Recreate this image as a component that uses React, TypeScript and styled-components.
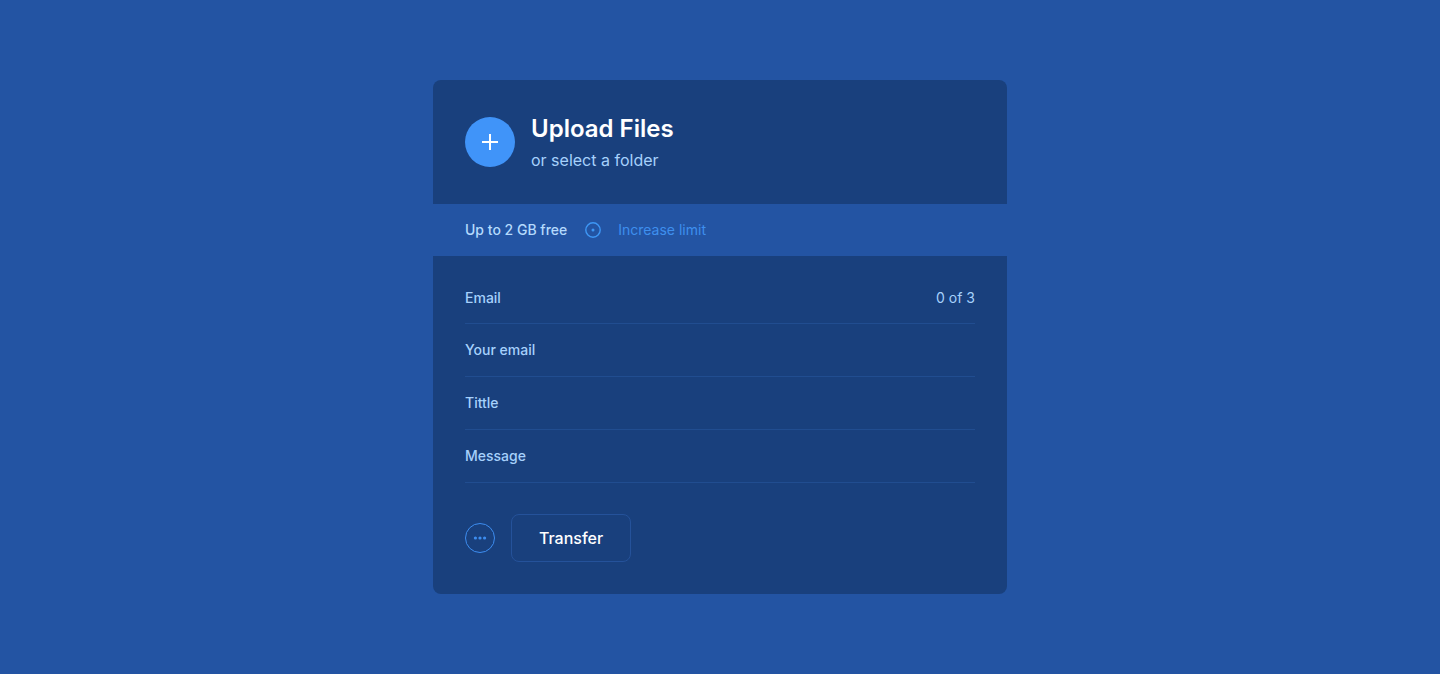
import React from "react";
import styled, { createGlobalStyle } from "styled-components";

const GlobalStyle = createGlobalStyle`
  *, *::before, *::after { box-sizing: border-box; }
  body {
    margin: 0;
    background: #2354a3;
    font-family: Inter, "Liberation Sans", sans-serif;
    -webkit-font-smoothing: antialiased;
  }
  button, input { font-family: inherit; }
`;

const Page = styled.main`
  min-height: 100vh;
  display: flex;
  align-items: center;
  justify-content: center;
  padding: 80px 24px;
`;

const Card = styled.form`
  width: 100%;
  max-width: 574px;
`;

const Header = styled.header`
  display: flex;
  align-items: center;
  gap: 16px;
  padding: 32px;
  border-radius: 8px 8px 0 0;
  background: #19407d;
`;

const AddButton = styled.button`
  display: flex;
  align-items: center;
  justify-content: center;
  width: 50px;
  height: 50px;
  padding: 0;
  border: 0;
  border-radius: 50%;
  background: #4094f9;
  color: #fff;
  cursor: pointer;
`;

const Heading = styled.div`
  display: flex;
  flex-direction: column;
  gap: 2px;
`;

const Title = styled.h1`
  margin: 0;
  color: #fff;
  font-size: 24px;
  font-weight: 600;
  line-height: 34px;
`;

const FolderLink = styled.a`
  color: #a6d1fc;
  font-size: 16px;
  line-height: 24px;
  text-decoration: none;
`;

const LimitBar = styled.div`
  display: flex;
  align-items: center;
  height: 52px;
  padding: 0 32px;
  gap: 16px;
  color: #b4dafd;
  font-size: 14px;
  font-weight: 500;
  line-height: 16px;
`;

const LimitLink = styled.a`
  color: #3e8fee;
  font-weight: 400;
  text-decoration: none;
`;

const Body = styled.div`
  padding: 16px 32px 32px;
  border-radius: 0 0 8px 8px;
  background: #19407d;
`;

const Field = styled.div`
  display: flex;
  align-items: center;
  gap: 12px;
  height: 53px;
  border-bottom: 1px solid #214d90;
  color: #a6d1fc;
  font-size: 14px;
  line-height: 16px;

  &:first-child {
    height: 52px;
  }
`;

const Label = styled.label`
  font-weight: 500;
`;

const Input = styled.input`
  flex: 1;
  min-width: 0;
  padding: 0;
  border: 0;
  outline: 0;
  background: transparent;
  color: #fff;
  font-size: 14px;
`;

const Actions = styled.div`
  display: flex;
  align-items: center;
  gap: 16px;
  padding-top: 31px;
`;

const MoreButton = styled.button`
  display: flex;
  align-items: center;
  justify-content: center;
  width: 30px;
  height: 30px;
  padding: 0;
  border: 1px solid #3d8df0;
  border-radius: 50%;
  background: transparent;
  color: #3d8df0;
  cursor: pointer;
`;

const TransferButton = styled.button`
  width: 120px;
  height: 48px;
  padding: 0;
  border: 1px solid #25529a;
  border-radius: 8px;
  background: transparent;
  color: #fff;
  font-size: 16px;
  font-weight: 500;
  cursor: pointer;
`;

const fields = [
  { id: "email", label: "Email", type: "email", count: "0 of 3" },
  { id: "sender", label: "Your email", type: "email" },
  { id: "title", label: "Tittle", type: "text" },
  { id: "message", label: "Message", type: "text" },
];

export default function App() {
  return (
    <>
      <GlobalStyle />
      <Page>
        <Card onSubmit={(e: React.FormEvent) => e.preventDefault()}>
          <Header>
            <AddButton type="button" aria-label="Add files">
              <svg width="16" height="16" viewBox="0 0 16 16" fill="none" stroke="currentColor" strokeWidth="2">
                <path d="M8 0v16M0 8h16" />
              </svg>
            </AddButton>
            <Heading>
              <Title>Upload Files</Title>
              <FolderLink href="#folder">or select a folder</FolderLink>
            </Heading>
          </Header>
          <LimitBar>
            <span>Up to 2 GB free</span>
            <svg width="19" height="18" viewBox="0 0 19 18" fill="none">
              <circle cx="10" cy="9" r="7.2" stroke="#3e97f5" strokeWidth="1.4" />
              <circle cx="10" cy="9" r="1.5" fill="#3e97f5" />
            </svg>
            <LimitLink href="#limit">Increase limit</LimitLink>
          </LimitBar>
          <Body>
            {fields.map((f) => (
              <Field key={f.id}>
                <Label htmlFor={f.id}>{f.label}</Label>
                <Input id={f.id} type={f.type} />
                {f.count && <span>{f.count}</span>}
              </Field>
            ))}
            <Actions>
              <MoreButton type="button" aria-label="More options">
                <svg width="14" height="4" viewBox="0 0 14 4" fill="currentColor">
                  <circle cx="2.4" cy="2" r="1.6" />
                  <circle cx="7" cy="2" r="1.6" />
                  <circle cx="11.6" cy="2" r="1.6" />
                </svg>
              </MoreButton>
              <TransferButton type="submit">Transfer</TransferButton>
            </Actions>
          </Body>
        </Card>
      </Page>
    </>
  );
}
